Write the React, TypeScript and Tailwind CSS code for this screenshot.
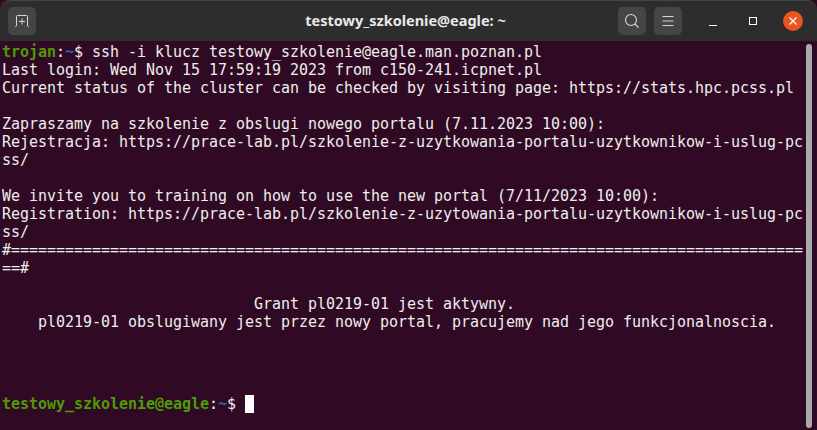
const green = 'text-[#4e9a06] font-bold';

function HeaderButton({ children }: { children: React.ReactNode }) {
  return (
    <div className="w-[28px] h-[28px] rounded-[5px] bg-[#454545] flex items-center justify-center">
      {children}
    </div>
  );
}

const lines = [
  'Last login: Wed Nov 15 17:59:19 2023 from c150-241.icpnet.pl',
  'Current status of the cluster can be checked by visiting page: https://stats.hpc.pcss.pl',
  '',
  'Zapraszamy na szkolenie z obslugi nowego portalu (7.11.2023 10:00):',
  'Rejestracja: https://prace-lab.pl/szkolenie-z-uzytkowania-portalu-uzytkownikow-i-uslug-pc',
  'ss/',
  '',
  'We invite you to training on how to use the new portal (7/11/2023 10:00):',
  'Registration: https://prace-lab.pl/szkolenie-z-uzytowania-portalu-uzytkownikow-i-uslug-pc',
  'ss/',
  '#========================================================================================',
  '==#',
  '',
  '                            Grant pl0219-01 jest aktywny.',
  '    pl0219-01 obslugiwany jest przez nowy portal, pracujemy nad jego funkcjonalnoscia.',
  '',
  '',
  '',
];

export default function App() {
  return (
    <div className="w-[817px] h-[430px] bg-[#300a24] overflow-hidden flex flex-col relative">
      <header className="h-[41px] shrink-0 bg-[#2d2d2d] rounded-t-[10px] border-t border-[#444] grid grid-cols-[1fr_auto_1fr] items-center pl-[8px] pr-[14px]">
        <div className="flex">
          <HeaderButton>
            <svg width="16" height="16" viewBox="0 0 16 16" fill="none" stroke="#d6d6d6" strokeWidth="1">
              <path d="M1 13.5h.5q1 0 1-1V3.5q0-1 1-1h9q1 0 1 1v9q0 1 1 1h.5" />
              <path d="M8 5.5v6M5 8.5h6" />
            </svg>
          </HeaderButton>
        </div>
        <div className="text-center text-[14.5px] font-bold text-[#e8e8e8] font-['Noto_Sans',sans-serif]">
          testowy_szkolenie@eagle: ~
        </div>
        <div className="flex items-center justify-end">
          <div className="flex gap-[8px] mr-[27px]">
            <HeaderButton>
              <svg width="16" height="16" viewBox="0 0 16 16" fill="none" stroke="#d6d6d6" strokeWidth="1.1">
                <circle cx="7" cy="7" r="5.5" />
                <path d="M11 11l3.5 3.5" />
              </svg>
            </HeaderButton>
            <HeaderButton>
              <svg width="12" height="10" viewBox="0 0 12 10" fill="none" stroke="#d6d6d6" strokeWidth="1">
                <path d="M0.5 .5h11M0.5 5h11M0.5 9.5h11" />
              </svg>
            </HeaderButton>
          </div>
          <div className="w-[40px] flex justify-start">
            <svg width="8" height="12" viewBox="0 0 8 12" fill="none" stroke="#fff" strokeWidth="1">
              <path d="M0 10.5h8" />
            </svg>
          </div>
          <div className="w-[34px] flex justify-start">
            <svg width="8" height="8" viewBox="0 0 8 8" fill="none" stroke="#fff" strokeWidth="1">
              <rect x=".5" y=".5" width="7" height="7" />
            </svg>
          </div>
          <div className="w-[20px]">
            <div className="w-[20px] h-[20px] rounded-full bg-[#e95420] flex items-center justify-center">
              <svg width="8" height="8" viewBox="0 0 8 8" fill="none" stroke="#fff" strokeWidth="1.3">
                <path d="M.5 .5l7 7M7.5 .5l-7 7" />
              </svg>
            </div>
          </div>
        </div>
      </header>
      <main className="pl-[2px] pt-[2px] font-['DejaVu_Sans_Mono',monospace] text-[15px] tracking-[-0.03px] leading-[18px] text-[#eeeeec] whitespace-pre">
        <div><span className={green}>trojan</span>:<span className="text-[#3465a4] font-bold">~</span>$ ssh -i klucz testowy_szkolenie@eagle.man.poznan.pl</div>
        {lines.map((l, i) => (
          <div key={i} className="h-[18px]">{l}</div>
        ))}
        <div className="mt-[10px]"><span className={green}>testowy_szkolenie@eagle</span>:<span className="text-[#3465a4] font-bold">~</span>$ <span className="inline-block w-[9px] h-[18px] bg-white align-top" /></div>
      </main>
      <div className="absolute right-[5px] top-[44px] w-[6px] h-[384px] rounded-full bg-[#ababab]" />
    </div>
  );
}
